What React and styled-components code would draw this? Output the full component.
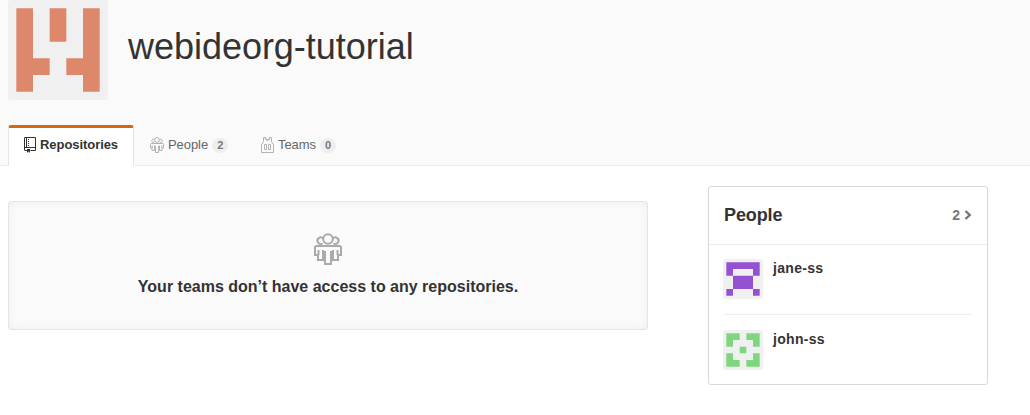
import React from "react";
import styled, { createGlobalStyle } from "styled-components";

const Global = createGlobalStyle`
  * { box-sizing: border-box; }
  body {
    margin: 0;
    background: #fff;
    color: #333;
    font-family: "Liberation Sans", Arial, sans-serif;
    font-size: 13px;
  }
  svg { display: block; flex: none; }
`;

const Page = styled.div`
  height: 415px;
  overflow: hidden;
`;

const Header = styled.header`
  display: flex;
  flex-direction: column;
  justify-content: space-between;
  height: 166px;
  padding: 0 8px;
  background: #fafafa;
  border-bottom: 1px solid #eee;
`;

const Org = styled.div`
  display: flex;
  gap: 20px;
`;

const OrgName = styled.h1`
  margin: 26px 0 0;
  font-size: 36px;
  font-weight: 400;
  line-height: 42px;
  letter-spacing: -0.03px;
`;

const Avatar = styled.svg`
  width: ${(p) => p.$size}px;
  height: ${(p) => p.$size}px;
  background: #f0f0f0;
  border-radius: 3px;
`;

const Tabs = styled.nav`
  display: flex;
  height: 41px;
  margin-bottom: -1px;
`;

const Tab = styled.a`
  display: flex;
  align-items: flex-start;
  gap: 4px;
  width: ${(p) => p.$width}px;
  padding: ${(p) => (p.$active ? "9px 15px 0" : "12px 16px 0")};
  line-height: 15px;
  letter-spacing: -0.06px;
  color: ${(p) => (p.$active ? "#333" : "#666")};
  font-weight: ${(p) => (p.$active ? 700 : 400)};
  border: solid ${(p) => (p.$active ? "#e5e5e5" : "transparent")};
  border-width: ${(p) => (p.$active ? "3px 1px 0" : "0")};
  border-top-color: ${(p) => (p.$active ? "#d26911" : "transparent")};
  border-radius: 3px 3px 0 0;
  background: ${(p) => (p.$active ? "#fff" : "transparent")};
`;

const Count = styled.span`
  min-width: 16px;
  height: 15px;
  padding: 0 5px;
  border-radius: 10px;
  background: #eee;
  color: #777;
  font-size: 11px;
  font-weight: 700;
  line-height: 15px;
  text-align: center;
  margin-top: 1px;
`;

const Main = styled.main`
  display: flex;
  align-items: flex-start;
  gap: 60px;
  padding: 20px 8px 0;
`;

const Blank = styled.section`
  display: flex;
  flex-direction: column;
  align-items: center;
  width: 640px;
  height: 129px;
  margin-top: 15px;
  padding-top: 31px;
  background: #fafafa;
  border: 1px solid #e5e5e5;
  border-radius: 3px;
  box-shadow: inset 0 0 10px rgba(0, 0, 0, 0.05);
`;

const BlankTitle = styled.h3`
  margin: 13px 0 0;
  font-size: 16px;
  line-height: 18px;
`;

const Card = styled.aside`
  width: 280px;
  height: 199px;
  border: 1px solid #d8d8d8;
  border-radius: 3px;
`;

const CardHeader = styled.div`
  display: flex;
  align-items: center;
  justify-content: space-between;
  height: 58px;
  padding: 0 15px 2px 15px;
  border-bottom: 1px solid #eee;
`;

const CardTitle = styled.h2`
  margin: 0;
  font-size: 18px;
  line-height: 20px;
  letter-spacing: -0.1px;
`;

const CardCount = styled.span`
  display: flex;
  align-items: center;
  gap: 4px;
  color: #777;
  font-size: 14px;
  font-weight: 700;
`;

const Members = styled.ul`
  list-style: none;
  margin: 0 14px;
  padding: 0;
`;

const Member = styled.li`
  display: flex;
  gap: 10px;
  padding: ${(p) => (p.$divided ? "15px 0 0" : "14px 0 15px")};
  border-top: ${(p) => (p.$divided ? "1px solid #eee" : "0")};
`;

const MemberName = styled.strong`
  font-size: 14px;
  line-height: 19px;
  letter-spacing: 0.3px;
`;

const Identicon = ({ size, color, rows, pad, cell }) => (
  <Avatar $size={size} viewBox={`0 0 ${size} ${size}`}>
    <path
      fill={color}
      d={rows
        .flatMap((row, y) =>
          [...row].map((c, x) =>
            c === "#"
              ? `M${pad + x * cell} ${pad + y * cell}h${cell}v${cell}h${-cell}z`
              : ""
          )
        )
        .join("")}
    />
  </Avatar>
);

const PeopleIcon = ({ width, height, color }) => (
  <svg width={width} height={height} viewBox="0 0 28 32" fill="none" stroke={color} strokeWidth="2">
    <circle cx="14" cy="6" r="4.8" />
    <path d="M9.2 5.4A3.2 3.2 0 1 0 8.6 10M18.8 5.4A3.2 3.2 0 1 1 19.4 10" transform="translate(0 .2)" />
    <path d="M10 13H2.5Q1 13 1 14.5V22H4V27H9V17M18 13H25.5Q27 13 27 14.5V22H24V27H19V17M4.5 17V22M23.5 17V22" />
    <path d="M10 13H18M9 23H11V31H17V23H19M11 18V23M17 18V23" />
  </svg>
);

const RepoIcon = () => (
  <svg width="12" height="16" viewBox="0 0 12 16" fill="none" stroke="#333">
    <path d="M3.5 13.5H1Q.5 13.5 .5 13V.5H11.5V13.5H6.5M.5 10.5H11.5M2.5 .5V10.5" />
    <path d="M4.5 2V9.5" strokeDasharray="1 1" />
    <path d="M3 12H6V16L4.5 14.6L3 16Z" fill="#333" stroke="none" />
  </svg>
);

const JerseyIcon = () => (
  <svg width="13" height="16" viewBox="0 0 13 16" fill="none" stroke="#b3b3b3">
    <path d="M2.5 .5H4.5L5 2.2Q6.5 3 8 2.2L8.5 .5H10.5V4.5L12.5 8V15.5H.5V8L2.5 4.5Z" />
    <path d="M4.5 .5V2.5Q6.5 4.7 8.5 2.5V.5M3.5 7.5H5.5V12.5H3.5ZM7.5 7.5H9.5V12.5H7.5Z" />
  </svg>
);

const Chevron = () => (
  <svg width="8" height="10" viewBox="0 0 8 10" fill="none" stroke="#777" strokeWidth="2.4">
    <path d="M1.5 1L5.7 5L1.5 9" />
  </svg>
);

export default function App() {
  return (
    <Page>
      <Global />
      <Header>
        <Org>
          <Identicon size={100} color="#dd876b" pad={8.33} cell={16.67} rows={["#.#.#", "#.#.#", "#...#", "##.##", "#...#"]} />
          <OrgName>webideorg-tutorial</OrgName>
        </Org>
        <Tabs>
          <Tab $active $width={126}>
            <RepoIcon />
            Repositories
          </Tab>
          <Tab $width={111}>
            <PeopleIcon width={14} height={16} color="#b3b3b3" />
            People
            <Count>2</Count>
          </Tab>
          <Tab $width={108}>
            <JerseyIcon />
            Teams
            <Count>0</Count>
          </Tab>
        </Tabs>
      </Header>
      <Main>
        <Blank>
          <PeopleIcon width={28} height={32} color="#aaa" />
          <BlankTitle>Your teams don’t have access to any repositories.</BlankTitle>
        </Blank>
        <Card>
          <CardHeader>
            <CardTitle>People</CardTitle>
            <CardCount>
              2
              <Chevron />
            </CardCount>
          </CardHeader>
          <Members>
            <Member>
              <Identicon size={40} color="#9452d3" pad={3.33} cell={6.67} rows={["#####", "#...#", ".###.", ".###.", "#...#"]} />
              <MemberName>jane-ss</MemberName>
            </Member>
            <Member $divided>
              <Identicon size={40} color="#7ed67e" pad={3.33} cell={6.67} rows={["##.##", "#...#", "..#..", "#...#", "##.##"]} />
              <MemberName>john-ss</MemberName>
            </Member>
          </Members>
        </Card>
      </Main>
    </Page>
  );
}
